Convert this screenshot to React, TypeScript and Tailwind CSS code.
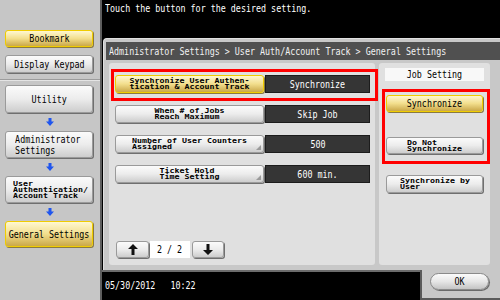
import React from "react";

const mono = "font-['DejaVu_Sans_Mono','Liberation_Mono',monospace]";

function T({ children, className = "" }: { children: React.ReactNode; className?: string }) {
  return (
    <span className={"inline-block whitespace-pre scale-x-[0.76] text-[11px] leading-[11px] " + className}>
      {children}
    </span>
  );
}

function S({ children, className = "" }: { children: React.ReactNode; className?: string }) {
  return (
    <span className={"inline-block whitespace-pre text-left text-[8.3px] leading-[7px] font-bold scale-y-[0.85] " + className}>
      {children}
    </span>
  );
}

const grayBtn =
  "bg-linear-to-b from-[#fbfbfb] via-[#ececec] to-[#cdcdcd] border border-[#9a9a9a] shadow-[1px_1px_0_#6f6f6f] rounded-[3px] text-black flex items-center justify-center";
const yellowBtn =
  "bg-linear-to-b from-[#fff8d0] via-[#f2de8c] to-[#caa848] border border-[#f0cc00] shadow-[1px_1px_0_#8a7a40] rounded-[3px] text-black flex items-center justify-center";
const darkBox =
  "bg-[#353535] border border-[#1c1c1c] text-white flex items-center justify-center";

function Arrow() {
  return (
    <div className="flex-1 flex items-center justify-center">
      <svg width="8" height="8" viewBox="0 0 8 8">
        <path d="M2.5 0 H5.5 V3.5 H8 L4 8 L0 3.5 H2.5 Z" fill="#1f55ee" />
      </svg>
    </div>
  );
}

function Corner() {
  return (
    <svg width="5" height="5" viewBox="0 0 5 5" className="absolute right-[2px] bottom-[2px]">
      <path d="M5 0 V5 H0 Z" fill="#9a9a9a" />
    </svg>
  );
}

export default function App() {
  return (
    <div className={"w-[500px] h-[300px] flex bg-black overflow-hidden " + mono}>
      {/* Sidebar */}
      <aside className="w-[102px] shrink-0 h-full bg-[#c6c6c6] border-r-2 border-[#5e5e5e] flex flex-col">
        <div className="px-[5px] pt-[30px] flex flex-col">
          <div className={yellowBtn + " h-[17px] w-[88px]"}>
            <T>Bookmark</T>
          </div>
          <div className={grayBtn + " h-[18px] w-[88px] mt-[8px]"}>
            <T>Display Keypad</T>
          </div>
        </div>
        <div className="mt-[6px] h-[2px] border-t border-[#9c9c9c] border-b border-b-[#e4e4e4]" />
        <div className="px-[5px] pt-[4px] flex flex-col">
          <div className={grayBtn + " h-[28px] w-[88px]"}>
            <T>Utility</T>
          </div>
          <div className="h-[18px] flex"><Arrow /></div>
          <div className={grayBtn + " h-[27px] w-[88px] !justify-start"}>
            <T className="leading-[10px] text-left origin-left pl-[12px]">{"Administrator\nSettings"}</T>
          </div>
          <div className="h-[18px] flex"><Arrow /></div>
          <div className={grayBtn + " h-[27px] w-[88px] !justify-start pl-[7px]"}>
            <S>{"User\nAuthentication/\nAccount Track"}</S>
          </div>
          <div className="h-[18px] flex"><Arrow /></div>
          <div className={yellowBtn + " h-[26px] w-[88px]"}>
            <T>General Settings</T>
          </div>
        </div>
      </aside>

      {/* Right column */}
      <div className="w-[398px] min-w-0 shrink-0 flex flex-col">
        <div className="h-[38px] pl-[3px] pt-[3px] text-white flex items-start">
          <T className="origin-left">Touch the button for the desired setting.</T>
        </div>

        <div className="h-[232px] ml-[1px] bg-[#c8c8c8] border-l border-t border-[#e0e0e0] rounded-tl-[4px] pt-[3px] pl-[2px] flex flex-col">
          <div className="h-[18px] bg-[#505050] text-[#f2f2f2] flex items-center pl-[3px] overflow-hidden">
            <T className="origin-left">Administrator Settings &gt; User Auth/Account Track &gt; General Settings</T>
          </div>
          <div className="flex pt-[3px] pl-[3px] gap-[4px] h-[205px]">
            {/* Left sub-panel */}
            <div className="relative w-[266px] h-[202px] bg-[#e0e0e0] rounded-[3px] flex flex-col pl-[6px] pt-[12px]">
              <div className="flex flex-col gap-[12px]">
                <div className="flex gap-[1px] h-[18px]">
                  <div className={yellowBtn + " w-[149px] h-full"}>
                    <S>{"Synchronize User Authen-\ntication & Account Track"}</S>
                  </div>
                  <div className={darkBox + " w-[105px] h-full"}>
                    <T>Synchronize</T>
                  </div>
                </div>
                <div className="flex gap-[1px] h-[18px]">
                  <div className={grayBtn + " w-[149px] h-full"}>
                    <S className="text-center">{"When # of Jobs\nReach Maximum"}</S>
                  </div>
                  <div className={darkBox + " w-[105px] h-full"}>
                    <T>Skip Job</T>
                  </div>
                </div>
                <div className="flex gap-[1px] h-[18px]">
                  <div className={grayBtn + " relative w-[149px] h-full"}>
                    <S>{"Number of User Counters\nAssigned"}</S>
                    <Corner />
                  </div>
                  <div className={darkBox + " w-[105px] h-full"}>
                    <T>500</T>
                  </div>
                </div>
                <div className="flex gap-[1px] h-[18px]">
                  <div className={grayBtn + " relative w-[149px] h-full"}>
                    <S>{"Ticket Hold\nTime Setting"}</S>
                    <Corner />
                  </div>
                  <div className={darkBox + " w-[105px] h-full"}>
                    <T>600 min.</T>
                  </div>
                </div>
              </div>

              <div className="mt-auto mb-[7px] ml-[1px] flex items-center h-[17px]">
                <div className={grayBtn + " w-[33px] h-full"}>
                  <svg width="10" height="11" viewBox="0 0 10 11">
                    <path d="M5 0 L10 5 H6.5 V11 H3.5 V5 H0 Z" fill="#111" />
                  </svg>
                </div>
                <div className="w-[40px] h-full bg-white flex items-center justify-center text-black ml-[1px]">
                  <T>2 / 2</T>
                </div>
                <div className={grayBtn + " w-[32px] h-full ml-[2px]"}>
                  <svg width="10" height="11" viewBox="0 0 10 11">
                    <path d="M5 11 L10 6 H6.5 V0 H3.5 V6 H0 Z" fill="#111" />
                  </svg>
                </div>
              </div>

              <div className="absolute left-[2px] top-[6px] w-[267px] h-[32px] border-[3px] border-[#ff0000]" />
            </div>

            {/* Right sub-panel */}
            <div className="relative w-[111px] h-[202px] bg-[#e0e0e0] rounded-[3px] flex flex-col px-[7px]">
              <div className="mt-[5px] -mx-[1px] h-[13px] bg-[#f8f8f8] flex items-center justify-center text-black">
                <T>Job Setting</T>
              </div>
              <div className={yellowBtn + " mt-[14px] h-[17px]"}>
                <T>Synchronize</T>
              </div>
              <div className={grayBtn + " mt-[25px] h-[17px]"}>
                <S>{"Do Not\nSynchronize"}</S>
              </div>
              <div className={grayBtn + " mt-[21px] h-[18px] !justify-start pl-[13px]"}>
                <S>{"Synchronize by\nUser"}</S>
              </div>
              <div className="absolute left-[3px] top-[26px] w-[108px] h-[75px] border-[3px] border-[#ff0000]" />
            </div>
          </div>
        </div>

        <div className="h-[30px] flex">
          <div className="w-[318px] border-t-2 border-[#6c6c6c] bg-black text-white pl-[3px] pt-[8px] overflow-hidden flex items-start">
            <T className="origin-left">{"05/30/2012   10:22"}</T>
          </div>
          <div className="w-[80px] bg-[#c8c8c8] border-l-2 border-b-2 border-[#5a5a5a] flex items-start pl-[8px] pt-[3px]">
            <div className="w-[59px] h-[17px] rounded-full bg-linear-to-b from-[#fbfbfb] via-[#e6e6e6] to-[#c4c4c4] border border-[#8a8a8a] shadow-[1px_1px_0_#6a6a6a] flex items-center justify-center text-black">
              <T>OK</T>
            </div>
          </div>
        </div>
      </div>
    </div>
  );
}
